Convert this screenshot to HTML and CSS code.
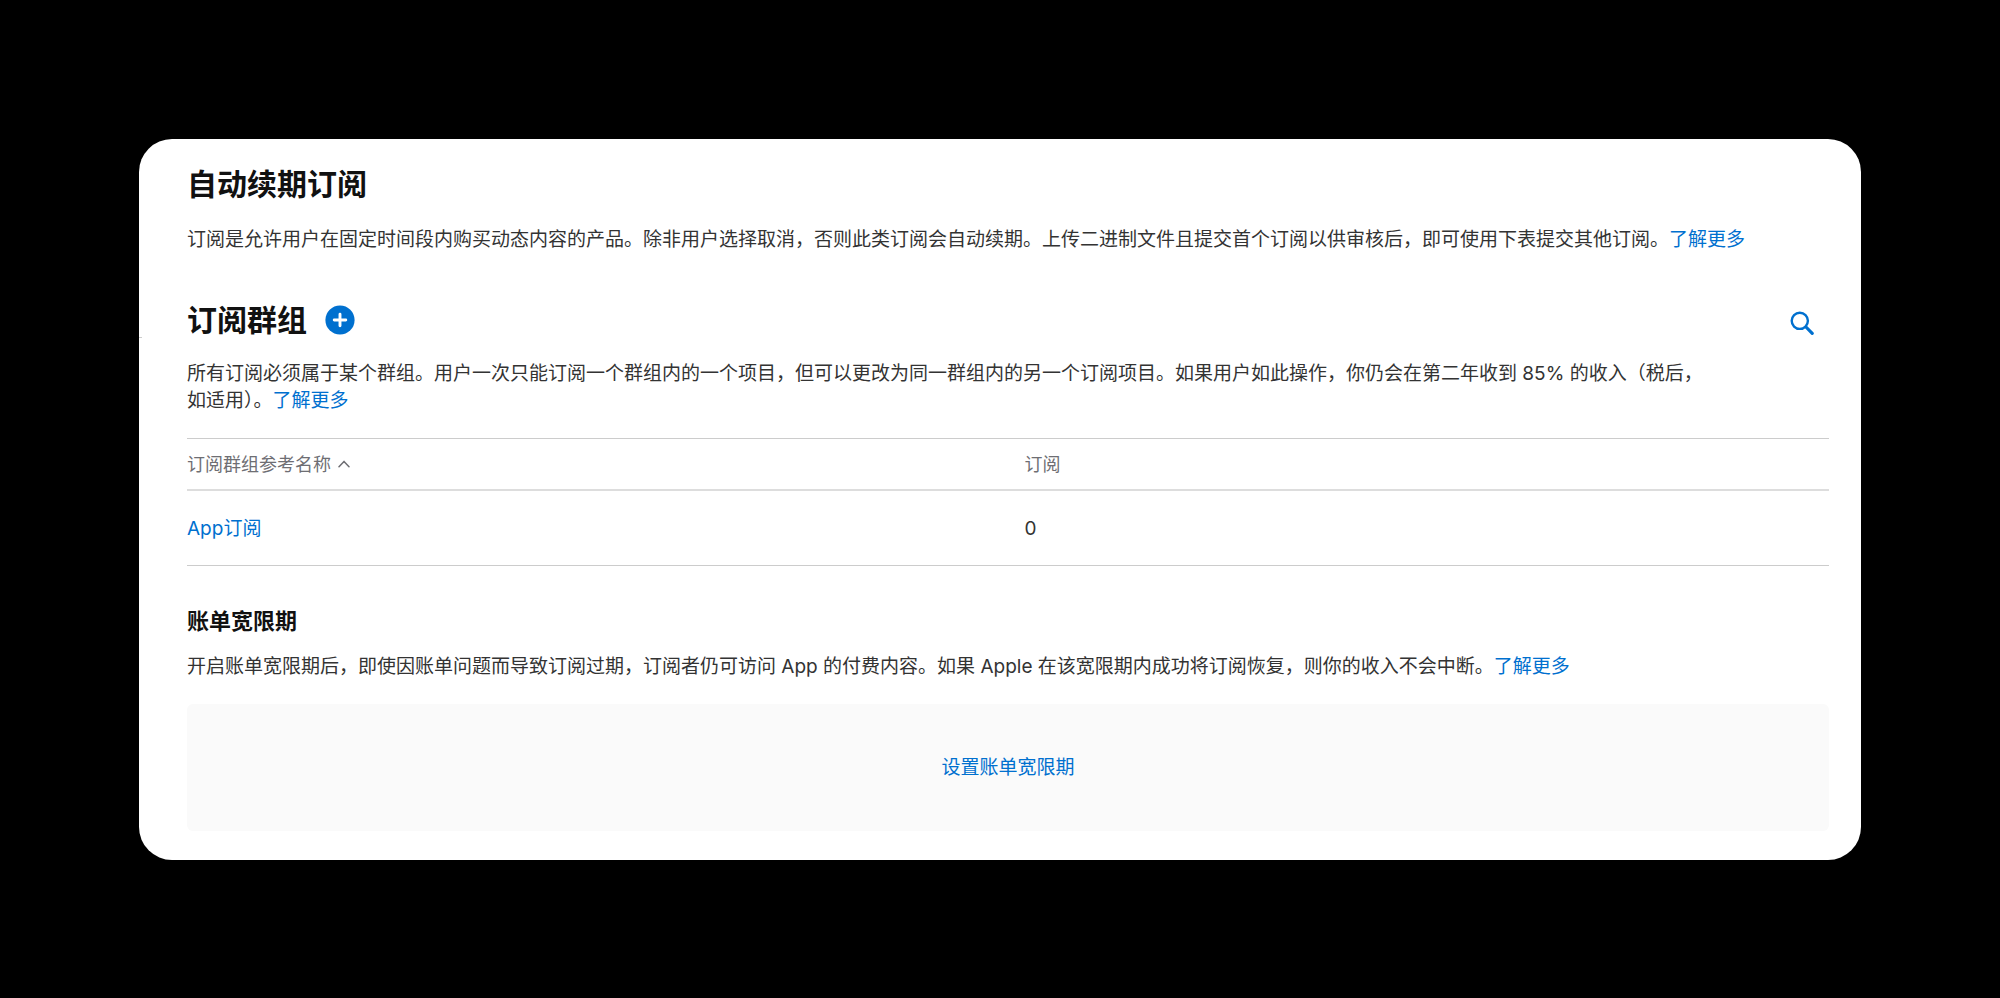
FILE: index.html
```html
<!DOCTYPE html>
<html lang="zh-CN">
<head>
<meta charset="utf-8">
<meta name="viewport" content="width=device-width, initial-scale=1">
<title>自动续期订阅</title>
<link rel="stylesheet" href="styles.css">
</head>
<body class="page">
<main class="card">
  <section class="intro">
    <h1 class="title">自动续期订阅</h1>
    <p class="text">订阅是允许用户在固定时间段内购买动态内容的产品。除非用户选择取消，否则此类订阅会自动续期。上传二进制文件且提交首个订阅以供审核后，即可使用下表提交其他订阅。<a class="link" href="#">了解更多</a></p>
  </section>

  <section class="groups">
    <div class="groups-head">
      <h2 class="title">订阅群组</h2>
      <button class="icon-button" type="button" aria-label="添加订阅群组">
        <svg width="30" height="30" viewBox="0 0 30 30" aria-hidden="true"><circle cx="15" cy="15" r="14.6" fill="#0070cf"/><path d="M15 9.2v11.6M9.2 15h11.6" stroke="#fff" stroke-width="2.9" stroke-linecap="round"/></svg>
      </button>
      <button class="icon-button search" type="button" aria-label="搜索">
        <svg width="24" height="24" viewBox="0 0 24 24" fill="none" stroke="#0070cf" aria-hidden="true"><circle cx="9.8" cy="9.8" r="8.1" stroke-width="2.4"/><path d="M16 16l6.2 6.4" stroke-width="3.2" stroke-linecap="round"/></svg>
      </button>
    </div>
    <p class="text groups-text">所有订阅必须属于某个群组。用户一次只能订阅一个群组内的一个项目，但可以更改为同一群组内的另一个订阅项目。如果用户如此操作，你仍会在第二年收到 85% 的收入（税后，如适用）。<a class="link" href="#">了解更多</a></p>
    <table class="table">
      <thead>
        <tr>
          <th class="name-col" scope="col" aria-sort="ascending"><button class="sort" type="button">订阅群组参考名称<svg width="12" height="8" viewBox="0 0 12 8" fill="none" stroke="#6e6e73" aria-hidden="true"><path d="M1 6.8L6 1.4l5 5.4" stroke-width="1.5" stroke-linecap="round" stroke-linejoin="round"/></svg></button></th>
          <th scope="col">订阅</th>
        </tr>
      </thead>
      <tbody>
        <tr>
          <td><a class="link" href="#">App订阅</a></td>
          <td>0</td>
        </tr>
      </tbody>
    </table>
  </section>

  <section class="grace">
    <h3 class="subtitle">账单宽限期</h3>
    <p class="text">开启账单宽限期后，即使因账单问题而导致订阅过期，订阅者仍可访问 App 的付费内容。如果 Apple 在该宽限期内成功将订阅恢复，则你的收入不会中断。<a class="link" href="#">了解更多</a></p>
    <div class="panel"><button class="panel-button" type="button">设置账单宽限期</button></div>
  </section>
</main>
</body>
</html>
```
FILE: styles.css
```css
* {
  box-sizing: border-box;
  margin: 0;
}

.page {
  padding: 139px;
  background: #000;
  color: #333;
  font-family: Inter, "Noto Sans CJK SC", sans-serif;
  font-size: 19px;
  line-height: 27px;
}

.card {
  position: relative;
  padding: 24px 32px 29px 48px;
  border-radius: 33px;
  background: #fff;
}

/* Edge of the divider that runs in from the sidebar */
.card::before {
  content: "";
  position: absolute;
  top: 198px;
  left: 0;
  width: 3px;
  height: 1px;
  background: #ccc;
}

.title {
  color: #111;
  font-size: 30px;
  font-weight: 700;
  line-height: 42px;
}

.intro .text {
  margin-top: 21px;
}

.link {
  color: #0070cf;
  text-decoration: none;
}

.groups {
  margin-top: 46px;
}

.groups-head {
  display: flex;
  align-items: center;
  gap: 18px;
  padding-right: 15px;
}

.icon-button {
  display: flex;
  padding: 0;
  border: 0;
  background: none;
  cursor: pointer;
}

.search {
  margin-left: auto;
  padding-top: 6px;
}

.groups-text {
  margin-top: 19px;
  padding-right: 120px;
}

.table {
  width: 100%;
  margin-top: 24px;
  border-spacing: 0;
  border-top: 1px solid #ccc;
  table-layout: fixed;
}

.table th {
  height: 52px;
  padding: 0;
  border-bottom: 2px solid #ddd;
  color: #6e6e73;
  font-size: 18px;
  font-weight: 400;
  text-align: left;
}

.table .name-col {
  width: 51%;
}

.sort {
  display: flex;
  align-items: center;
  gap: 7px;
  padding: 0;
  border: 0;
  background: none;
  color: inherit;
  font: inherit;
  cursor: pointer;
}

.table td {
  height: 75px;
  padding: 0;
  border-bottom: 1px solid #ccc;
}

.grace {
  margin-top: 40px;
}

.subtitle {
  color: #111;
  font-size: 22px;
  font-weight: 700;
  line-height: 30px;
}

.grace .text {
  margin-top: 17px;
}

.panel {
  display: flex;
  justify-content: center;
  margin-top: 24px;
  padding: 50px 24px;
  border-radius: 6px;
  background: #fafafa;
}

.panel-button {
  padding: 0;
  border: 0;
  background: none;
  color: #0070cf;
  font: inherit;
  cursor: pointer;
}
```
